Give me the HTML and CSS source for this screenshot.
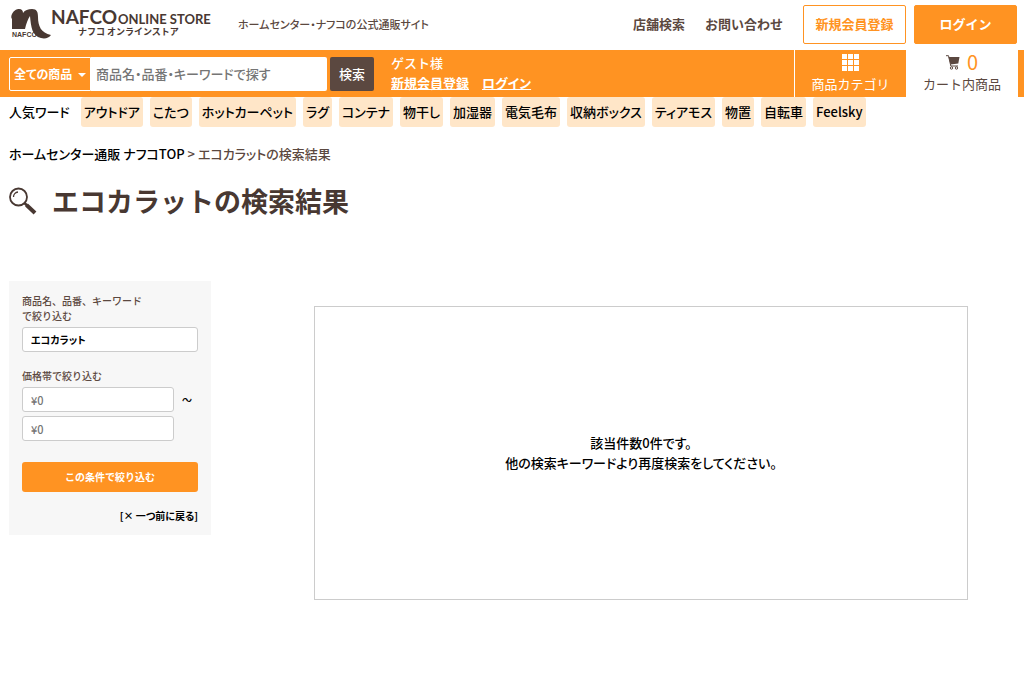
FILE: index.html
```html
<!DOCTYPE html>
<html lang="ja">
<head>
<meta charset="utf-8">
<meta name="viewport" content="width=device-width, initial-scale=1">
<title>エコカラットの検索結果</title>
<link rel="stylesheet" href="styles.css">
</head>
<body>
<header class="header">
  <a class="logo" href="#" aria-label="ナフコ オンラインストア">
    <svg width="202" height="32" viewBox="0 0 202 32" fill="#483832">
      <path d="M2 21V11C1 10 1 8 2 6C4 2 7 1 9 1C12 1 13 3 13 5C15 2 18 1 22 1C27 1 28 4 28 9C28 18 31 25 41 27C39 30 35 31 31 30C22 28 21 19 20 8C18 11 16 16 15 21Z"/>
      <text class="logo-mini" x="2" y="29">NAFCO</text>
      <text class="logo-name" x="41" y="16">NAFCO</text>
      <text class="logo-store" x="108" y="16">ONLINE STORE</text>
      <text class="logo-kana" x="68" y="27">ナフコ オンラインストア</text>
    </svg>
  </a>
  <p class="tagline">ホームセンター・ナフコの公式通販サイト</p>
  <nav class="header-nav">
    <a class="nav-link" href="#">店舗検索</a>
    <a class="nav-link" href="#">お問い合わせ</a>
    <a class="header-button header-button-outline" href="#">新規会員登録</a>
    <a class="header-button" href="#">ログイン</a>
  </nav>
</header>

<div class="bar">
  <form class="search">
    <div class="search-category">
      <select class="search-select" aria-label="カテゴリ"><option>全ての商品</option></select>
      <svg class="search-arrow" width="8" height="4" viewBox="0 0 8 4"><path d="M0 0H8L4 4Z" fill="#fff"/></svg>
    </div>
    <input class="search-input" type="text" aria-label="検索" placeholder="商品名・品番・キーワードで探す">
    <button class="search-button" type="button">検索</button>
  </form>
  <div class="guest">
    <p class="guest-name">ゲスト様</p>
    <p class="guest-links"><a href="#">新規会員登録</a><a href="#">ログイン</a></p>
  </div>
  <a class="tile tile-category" href="#">
    <span class="tile-top">
      <svg width="17" height="17" viewBox="0 0 17 17" fill="#fff"><path d="M0 0h5v5H0zM6 0h5v5H6zM12 0h5v5h-5zM0 6h5v5H0zM6 6h5v5H6zM12 6h5v5h-5zM0 12h5v5H0zM6 12h5v5H6zM12 12h5v5h-5z"/></svg>
    </span>
    <span class="tile-label">商品カテゴリ</span>
  </a>
  <a class="tile tile-cart" href="#">
    <span class="tile-top">
      <svg width="14" height="15" viewBox="0 0 14 15"><path d="M2.500 2H13.500L12.300 8.500L4.500 9.500Z" fill="#5b4840"/><path d="M0 .7H2.500L4.800 11H12" fill="none" stroke="#5b4840"/><circle cx="5.500" cy="13" r="1.200" fill="none" stroke="#5b4840"/><circle cx="10.500" cy="13" r="1.200" fill="none" stroke="#5b4840"/></svg>
      <span class="cart-count">0</span>
    </span>
    <span class="tile-label">カート内商品</span>
  </a>
</div>

<nav class="keywords">
  <span class="keywords-title">人気ワード</span>
  <a class="keyword" href="#">アウトドア</a>
  <a class="keyword" href="#">こたつ</a>
  <a class="keyword" href="#">ホットカーペット</a>
  <a class="keyword" href="#">ラグ</a>
  <a class="keyword" href="#">コンテナ</a>
  <a class="keyword" href="#">物干し</a>
  <a class="keyword" href="#">加湿器</a>
  <a class="keyword" href="#">電気毛布</a>
  <a class="keyword" href="#">収納ボックス</a>
  <a class="keyword" href="#">ティアモス</a>
  <a class="keyword" href="#">物置</a>
  <a class="keyword" href="#">自転車</a>
  <a class="keyword" href="#">Feelsky</a>
</nav>

<nav class="breadcrumb"><a href="#">ホームセンター通販 ナフコTOP</a> &gt; エコカラットの検索結果</nav>

<div class="heading">
  <svg width="28" height="28" viewBox="0 0 28 28" fill="none" stroke="#483832"><circle cx="9.500" cy="10" r="8.500" stroke-width="1.800"/><path d="M4.500 10A5 5 0 0 1 9 5" stroke-width="1.300"/><path d="M15.500 16L18 18.500" stroke-width="2.500"/><path d="M17.500 18L26 26" stroke-width="4"/></svg>
  <h1 class="title">エコカラットの検索結果</h1>
</div>

<main class="content">
  <form class="filter">
    <label class="filter-label" for="word">商品名、品番、キーワード<br>で絞り込む</label>
    <input class="field field-word" id="word" type="text" value="エコカラット">
    <label class="filter-label filter-label-price" for="price-min">価格帯で絞り込む</label>
    <div class="price-row">
      <input class="field" id="price-min" type="text" placeholder="¥0">
      <span class="tilde">～</span>
      <input class="field" id="price-max" type="text" placeholder="¥0" aria-label="価格の上限">
    </div>
    <button class="filter-button" type="button">この条件で絞り込む</button>
    <a class="back" href="#">[× 一つ前に戻る]</a>
  </form>
  <section class="result">
    <p>該当件数0件です。<br>他の検索キーワードより再度検索をしてください。</p>
  </section>
</main>
</body>
</html>
```
FILE: styles.css
```css
* { box-sizing: border-box; }

body {
  margin: 0;
  background: #fff;
  color: #000;
  font-family: "Noto Sans CJK JP", sans-serif;
  font-size: 13px;
  font-weight: 500;
  line-height: 20px;
  font-feature-settings: "palt";
}

p, h1 { margin: 0; }
a { color: inherit; text-decoration: none; }
svg { display: block; flex: none; }
input, button, select { font: inherit; font-feature-settings: inherit; margin: 0; }

.header {
  display: flex;
  align-items: center;
  height: 50px;
  padding: 0 7px 2px 10px;
  color: #5b4840;
}

.logo-mini { font: bold 7px "Liberation Sans", sans-serif; }
.logo-name { font: bold 19px Lato, sans-serif; }
.logo-store { font: bold 13px Lato, sans-serif; }
.logo-kana { font: bold 9px "Noto Sans CJK JP", sans-serif; font-feature-settings: normal; }

.tagline { margin-left: 26px; font-size: 11px; }

.header-nav {
  display: flex;
  align-items: center;
  margin-left: auto;
  font-weight: 700;
  font-feature-settings: normal;
}

.nav-link { margin-right: 20px; }

.header-button {
  display: flex;
  align-items: center;
  justify-content: center;
  width: 103px;
  height: 39px;
  margin-left: 8px;
  border: 1px solid #ff9322;
  border-radius: 2px;
  background: #ff9322;
  color: #fff;
}

.header-button-outline {
  margin-left: 0;
  background: #fff;
  color: #ff9322;
}

.bar {
  display: flex;
  height: 47px;
  padding: 0 6px 0 9px;
  background: #ff9322;
  color: #fff;
}

.search {
  display: flex;
  align-items: center;
  height: 47px;
}

.search-category {
  position: relative;
  width: 82px;
  height: 34px;
}

.search-select {
  appearance: none;
  width: 100%;
  height: 100%;
  padding: 0 0 0 4px;
  border: 1px solid #fff;
  border-radius: 2px 0 0 2px;
  background: #ff9322;
  color: #fff;
  font-size: 12px;
  font-weight: 700;
}

.search-arrow { position: absolute; right: 5px; top: 16px; }

.search-input {
  width: 236px;
  height: 34px;
  padding: 0 5px;
  border: 0;
  border-radius: 0 2px 2px 0;
}

.search-input::placeholder, .field::placeholder { color: #757575; opacity: 1; }

.search-button {
  width: 44px;
  height: 34px;
  margin-left: 3px;
  padding: 0;
  border: 0;
  border-radius: 2px;
  background: #5b4840;
  color: #fff;
  font-feature-settings: normal;
}

.guest {
  flex: 1;
  margin-left: 17px;
  padding-top: 3px;
}

.guest-name { font-feature-settings: normal; }

.guest-links {
  display: flex;
  gap: 13px;
  font-weight: 700;
}

.guest-links a { text-decoration: underline; }
.guest-links a:first-child { font-feature-settings: normal; }

.tile {
  display: flex;
  flex-direction: column;
  align-items: center;
  width: 112px;
  font-weight: 400;
  font-feature-settings: normal;
}

.tile-category { border-left: 1px solid #fff; }
.tile-cart { background: #fff; color: #5b4840; }

.tile-top {
  display: flex;
  align-items: center;
  gap: 7px;
  height: 24px;
}

.cart-count { color: #ff9322; font-size: 20px; }

.keywords {
  display: flex;
  gap: 7px;
  padding-left: 9px;
  line-height: 30px;
}

.keywords-title { margin-right: 4px; }

.keyword {
  padding: 0 3px;
  border-radius: 3px;
  background: #ffe6c8;
}

.breadcrumb { padding: 17px 9px 0; color: #5b4840; }
.breadcrumb a { color: #000; }

.heading {
  display: flex;
  align-items: center;
  gap: 15px;
  padding: 18px 9px 0;
}

.title {
  color: #483832;
  font-size: 27px;
  font-weight: 700;
  line-height: 38px;
  font-feature-settings: normal;
}

.content {
  display: flex;
  align-items: flex-start;
  padding: 61px 56px 0 9px;
}

.filter {
  display: flex;
  flex-direction: column;
  width: 202px;
  padding: 12px 13px;
  background: #f7f7f7;
  font-size: 10px;
  line-height: 15px;
}

.filter-label {
  color: #5b4840;
  font-feature-settings: normal;
}

.filter-label-price { margin-top: 16px; }

.field {
  width: 152px;
  height: 25px;
  padding: 0 8px;
  border: 1px solid #ccc;
  border-radius: 3px;
  background: #fff;
  font-size: 11px;
}

.field-word {
  width: 100%;
  margin-top: 4px;
  font-size: 10px;
  font-weight: 700;
}

.price-row {
  display: flex;
  flex-wrap: wrap;
  align-items: center;
  gap: 4px 8px;
  margin-top: 4px;
}

.filter-button {
  height: 30px;
  margin-top: 21px;
  padding: 0 0 2px;
  border: 0;
  border-radius: 3px;
  background: #ff9322;
  color: #fff;
  font-weight: 700;
  font-feature-settings: normal;
}

.back {
  align-self: flex-end;
  margin-top: 16px;
  font-weight: 700;
}

.result {
  display: flex;
  flex: 1;
  align-items: center;
  justify-content: center;
  min-height: 294px;
  margin: 25px 0 0 103px;
  border: 1px solid #ccc;
  text-align: center;
}
```
